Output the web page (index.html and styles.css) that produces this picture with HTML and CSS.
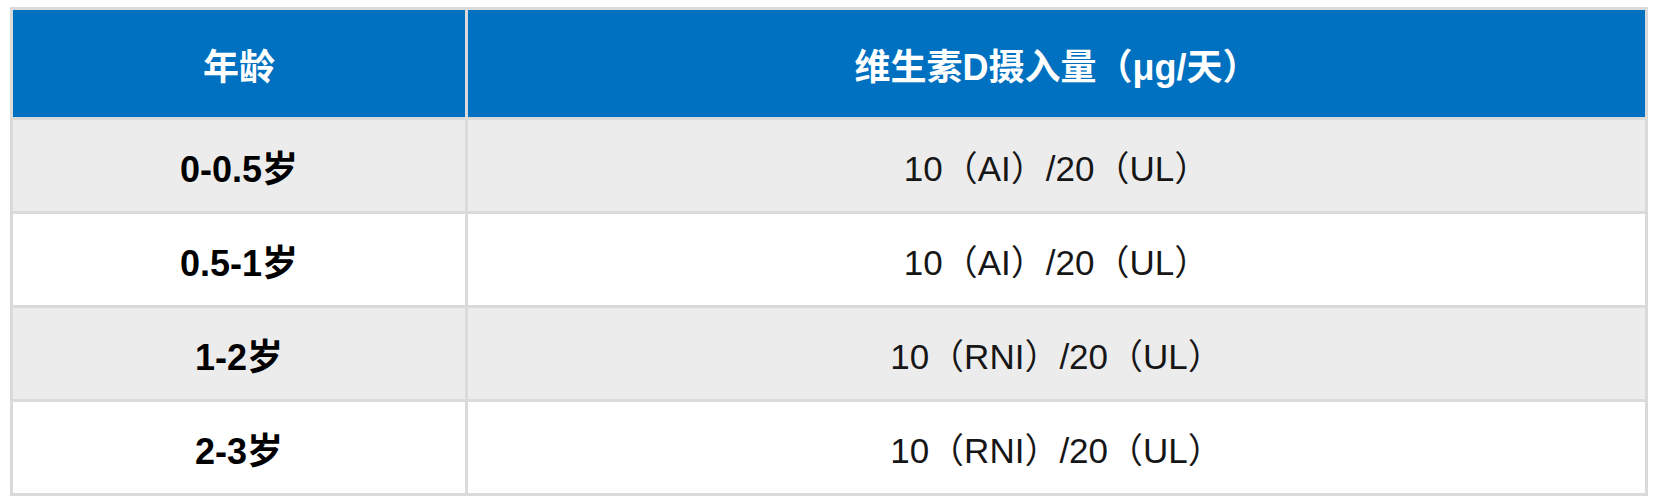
FILE: index.html
```html
<!DOCTYPE html>
<html lang="zh-CN">
<head>
<meta charset="utf-8">
<title>维生素D摄入量</title>
<link rel="stylesheet" href="styles.css">
</head>
<body>
<table class="vd-table">
  <thead>
    <tr class="head-row">
      <th class="col-age">年龄</th>
      <th class="col-dose">维生素D摄入量（μg/天）</th>
    </tr>
  </thead>
  <tbody>
    <tr class="row-odd">
      <td class="age">0-0.5岁</td>
      <td class="dose">10（AI）/20（UL）</td>
    </tr>
    <tr class="row-even">
      <td class="age">0.5-1岁</td>
      <td class="dose">10（AI）/20（UL）</td>
    </tr>
    <tr class="row-odd">
      <td class="age">1-2岁</td>
      <td class="dose">10（RNI）/20（UL）</td>
    </tr>
    <tr class="row-even">
      <td class="age">2-3岁</td>
      <td class="dose">10（RNI）/20（UL）</td>
    </tr>
  </tbody>
</table>
</body>
</html>
```
FILE: styles.css
```css
html, body {
  margin: 0;
  padding: 0;
  background: #ffffff;
}

body {
  padding: 7px 0 0 10px;
  font-family: "Liberation Sans", "Noto Sans CJK SC", sans-serif;
}

.vd-table {
  border-collapse: separate;
  border-spacing: 0;
  width: 1638px;
  border-top: 3px solid #dadada;
  border-left: 3px solid #dadada;
  table-layout: fixed;
}

.vd-table th,
.vd-table td {
  border-right: 3px solid #dadada;
  border-bottom: 3px solid #dadada;
  text-align: center;
  vertical-align: middle;
  padding: 0;
}

.col-age {
  width: 452px;
}

.head-row th {
  background: #0070c0;
  color: #ffffff;
  font-weight: bold;
  font-size: 36px;
  height: 107px;
}

.vd-table td {
  height: 91px;
}

.row-odd td {
  background: #ececec;
}

.row-even td {
  background: #ffffff;
}

.age {
  font-weight: bold;
  font-size: 36px;
  color: #000000;
}

.dose {
  font-size: 35px;
  color: #161616;
}
```
